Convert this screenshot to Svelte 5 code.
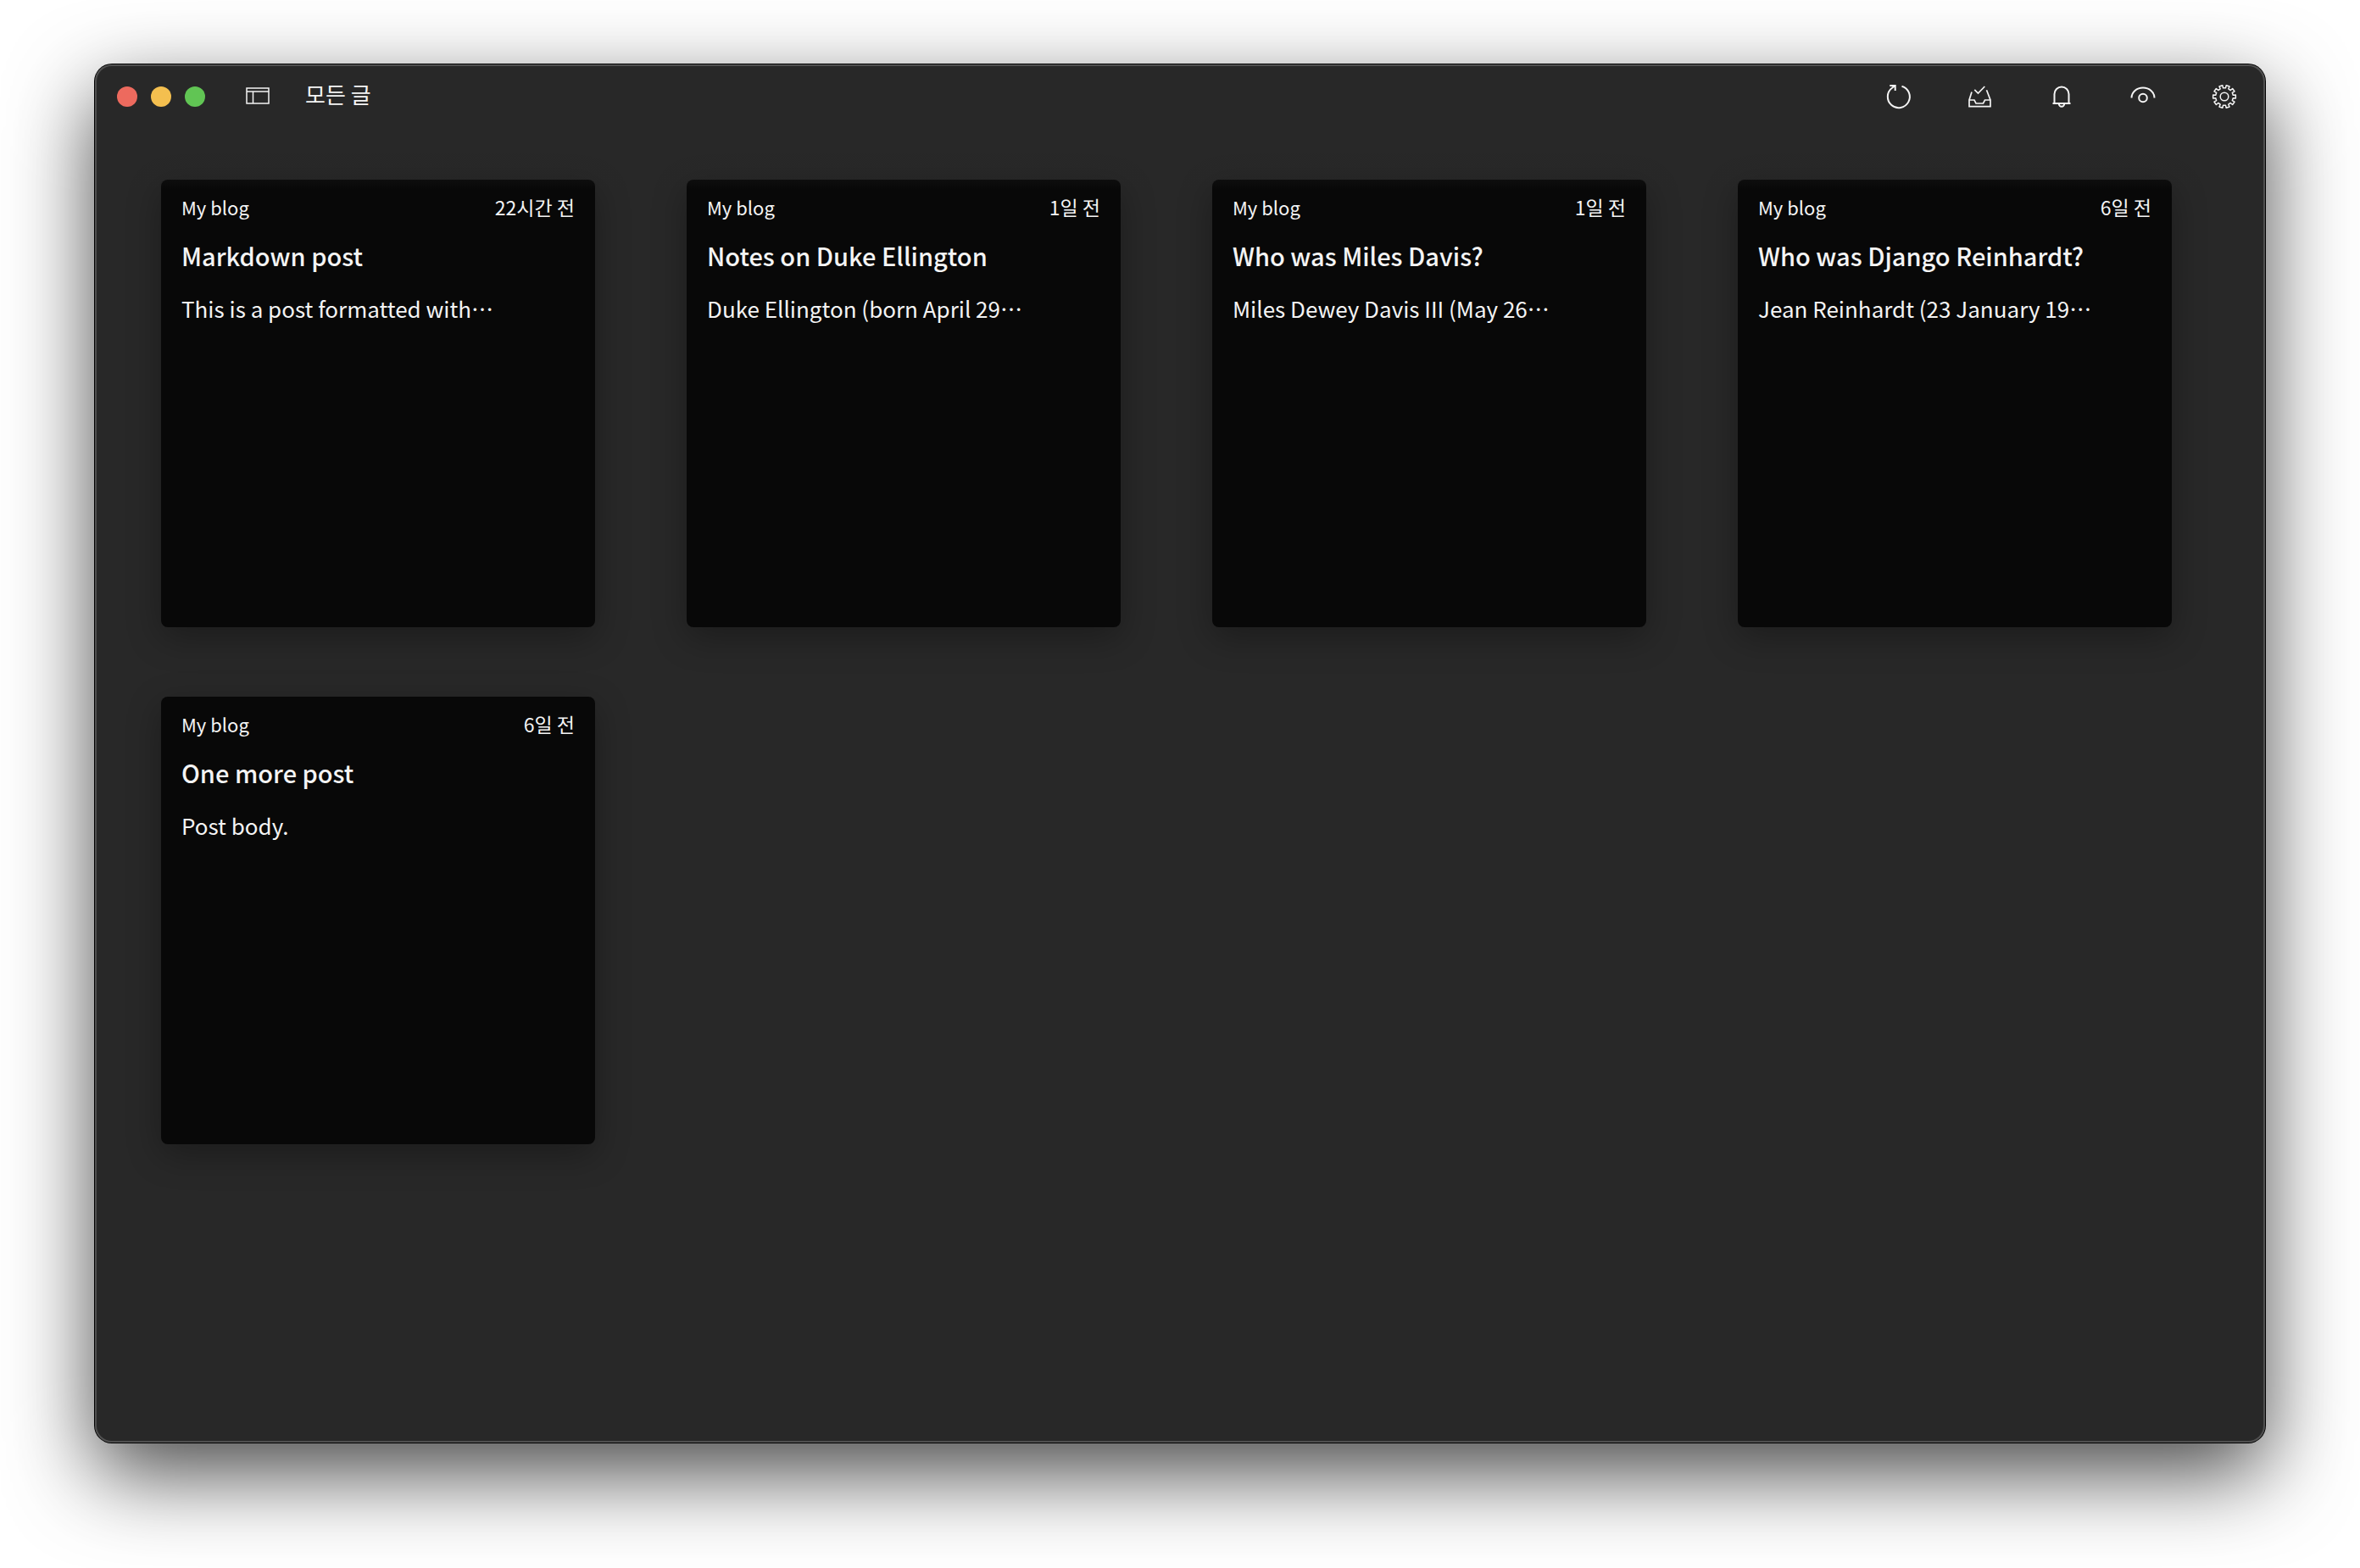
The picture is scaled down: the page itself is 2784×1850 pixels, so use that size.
<script>
  const posts = [
    { blog: 'My blog', age: '22시간 전', title: 'Markdown post', excerpt: 'This is a post formatted with…' },
    { blog: 'My blog', age: '1일 전', title: 'Notes on Duke Ellington', excerpt: 'Duke Ellington (born April 29…' },
    { blog: 'My blog', age: '1일 전', title: 'Who was Miles Davis?', excerpt: 'Miles Dewey Davis III (May 26…' },
    { blog: 'My blog', age: '6일 전', title: 'Who was Django Reinhardt?', excerpt: 'Jean Reinhardt (23 January 19…' },
    { blog: 'My blog', age: '6일 전', title: 'One more post', excerpt: 'Post body.' },
  ];

  // Outline of a gear, centred in a 32 unit box.
  const teeth = 10;
  const gear = Array.from({ length: teeth }, (_, i) => {
    const base = (i * 2 * Math.PI) / teeth;
    return [
      [-0.17, 10.4],
      [-0.15, 13.5],
      [0.15, 13.5],
      [0.17, 10.4],
    ].map(([turn, radius]) => {
      const a = base + turn;
      return `${(16 + radius * Math.cos(a)).toFixed(2)},${(16 + radius * Math.sin(a)).toFixed(2)}`;
    });
  }).flat().join(' ');
</script>

<div class="desktop">
  <main class="window">
    <header class="toolbar">
      <div class="lights">
        <button class="light close" aria-label="닫기"></button>
        <button class="light minimize" aria-label="최소화"></button>
        <button class="light zoom" aria-label="확대"></button>
      </div>
      <button class="tool sidebar" aria-label="사이드바">
        <svg viewBox="0 0 32 32"><path d="M3 6h26v18H3zM3 10h26M10.500 10v14" stroke-width="1.500" /></svg>
      </button>
      <h1>모든 글</h1>
      <div class="tools">
        <button class="tool" aria-label="새로 고침">
          <svg viewBox="0 0 32 32"><path d="M19.500 3.700A13 13 0 1 1 8 5.800L11.500 3M5.300 3h6.400v6" /></svg>
        </button>
        <button class="tool" aria-label="보관함">
          <svg viewBox="0 0 32 32"><path d="M6 10.500L3 20v7.700h25V20L23.500 8.300M3 20h6l2 4h8.500l2-4H28M9.300 7.800l4.200 4.200L21.300 4" stroke-width="1.700" /></svg>
        </button>
        <button class="tool" aria-label="알림">
          <svg viewBox="0 0 32 32"><path d="M5.500 24h21M7.500 24V13a8.500 8.500 0 0 1 17 0v11M12.800 24.500a3.200 3.200 0 0 0 6.400 0" /></svg>
        </button>
        <button class="tool" aria-label="미리보기">
          <svg viewBox="0 0 32 32"><path d="M2.500 17.500a13.500 12 0 0 1 27 0" /><circle cx="16" cy="17.500" r="4.800" /></svg>
        </button>
        <button class="tool" aria-label="설정">
          <svg viewBox="0 0 32 32"><polygon points={gear} stroke-width="1.500" stroke-linejoin="round" /><circle cx="16" cy="16" r="4.800" stroke-width="1.500" /></svg>
        </button>
      </div>
    </header>
    <section class="grid">
      {#each posts as post}
        <article class="card">
          <div class="meta"><span>{post.blog}</span><time>{post.age}</time></div>
          <h2>{post.title}</h2>
          <p lang="zh-CN">{post.excerpt}</p>
        </article>
      {/each}
    </section>
  </main>
</div>

<style>
  :global(body) {
    background: #fff;
  }
  .desktop {
    box-sizing: border-box;
    min-height: 100vh;
    padding: 76px 112px 148px;
    display: flex;
    overflow: hidden;
    font-family: 'Noto Sans CJK KR', sans-serif;
    color: #f4f4f4;
  }
  .window {
    flex: 1;
    background: #282828;
    border-radius: 20px;
    box-shadow:
      inset 0 0 0 2px #505050,
      0 0 0 1px #000,
      0 36px 100px rgba(0, 0, 0, 0.72);
  }
  .toolbar {
    position: relative;
    height: 76px;
    padding: 0 32px 0 26px;
    display: flex;
    align-items: center;
  }
  .toolbar::after {
    content: '';
    position: absolute;
    top: 100%;
    left: 2px;
    right: 2px;
    height: 72px;
    background: linear-gradient(#282828, rgba(40, 40, 40, 0));
    pointer-events: none;
  }
  button {
    border: 0;
    padding: 0;
    background: none;
    color: inherit;
  }
  .lights {
    display: flex;
    gap: 16px;
  }
  .light {
    width: 24px;
    height: 24px;
    border-radius: 50%;
  }
  .close {
    background: #ed6a5e;
  }
  .minimize {
    background: #f4bf4f;
  }
  .zoom {
    background: #61c554;
  }
  .tool {
    width: 32px;
    height: 32px;
  }
  .tool svg {
    display: block;
    width: 32px;
    height: 32px;
    fill: none;
    stroke: #f4f4f4;
  }
  .tools svg {
    stroke-width: 2;
  }
  .sidebar {
    margin-left: 46px;
  }
  h1 {
    margin: 0 0 0 40px;
    padding-bottom: 6px;
    font-size: 26px;
    line-height: 36px;
    font-weight: 400;
  }
  .tools {
    margin-left: auto;
    display: flex;
    gap: 64px;
  }
  .grid {
    padding: 60px 110px 60px 78px;
    display: grid;
    grid-template-columns: repeat(4, 1fr);
    column-gap: 108px;
    row-gap: 82px;
  }
  .card {
    box-sizing: border-box;
    min-height: 528px;
    padding: 14px 24px;
    background: #080808;
    border-radius: 8px;
    box-shadow: 0 12px 40px rgba(0, 0, 0, 0.3);
  }
  .meta {
    display: flex;
    justify-content: space-between;
    font-size: 22px;
    line-height: 36px;
  }
  time {
    font-size: 23px;
  }
  h2 {
    margin: 16px 0 0;
    font-size: 29px;
    line-height: 46px;
    font-weight: 500;
  }
  p {
    margin: 20px 0 0;
    font-family: 'Noto Sans CJK SC', sans-serif;
    font-size: 26px;
    line-height: 40px;
  }
</style>
